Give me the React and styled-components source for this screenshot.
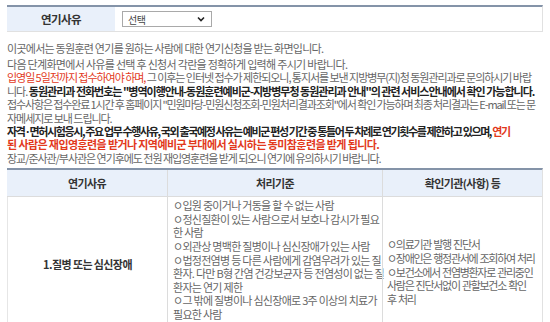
import styled, { createGlobalStyle } from "styled-components";

const GlobalStyle = createGlobalStyle`
  body {
    margin: 0;
    background: #ffffff;
    font-family: "Noto Sans CJK KR", "Noto Sans", sans-serif;
  }
`;

const Page = styled.div`
  width: 536px;
  padding: 5px 7px 0;
  font-size: 11px;
  letter-spacing: -1.05px;
  color: #666666;
`;

const FormTable = styled.div`
  display: grid;
  grid-template-columns: 108px 1fr;
  border-top: 2px solid #8493a8;
  border-bottom: 1px solid #e1e1e1;
  border-right: 1px solid #e1e1e1;
`;

const FormLabel = styled.div`
  background: #e9f0fa;
  color: #333333;
  font-weight: 700;
  font-size: 11.5px;
  letter-spacing: -0.6px;
  display: flex;
  align-items: center;
  justify-content: center;
  height: 24px;
`;

const FormField = styled.div`
  display: flex;
  align-items: center;
  padding-left: 7px;
`;

const SelectBox = styled.div`
  width: 90px;
  height: 16px;
  border: 1px solid #a9a9a9;
  display: flex;
  align-items: center;
  justify-content: space-between;
  padding: 0 6px 0 5px;
  box-sizing: border-box;
  color: #444444;
  font-size: 10px;
  letter-spacing: -0.4px;
`;

const Intro = styled.p`
  margin: 9px 0 3px;
  line-height: 14px;
  white-space: nowrap;
  letter-spacing: -0.74px;
`;

const Notes = styled.div`
  line-height: 13.4px;
`;

const Line = styled.div`
  white-space: nowrap;
  color: ${(p) => (p.$strong ? "#222222" : "#666666")};
  font-weight: ${(p) => (p.$strong ? 700 : 400)};
  letter-spacing: ${(p) => (p.$ls !== undefined ? `${p.$ls}px` : "inherit")};
`;

const Red = styled.span`
  color: #e2391c;
  font-weight: ${(p) => (p.$bold ? 700 : 400)};
`;

const Bold = styled.span`
  color: #222222;
  font-weight: 700;
`;

const Table = styled.div`
  margin-top: 3px;
  display: grid;
  grid-template-columns: 160px 215px 1fr;
  border-top: 2px solid #8493a8;
  border-right: 1px solid #e1e1e1;
`;

const HeadCell = styled.div`
  background: #e9f0fa;
  color: #333333;
  font-weight: 700;
  letter-spacing: -0.6px;
  height: 26px;
  display: flex;
  align-items: center;
  justify-content: center;
  border-left: ${(p) => (p.$first ? "none" : "1px solid #dcdcdc")};
  border-bottom: 1px solid #dcdcdc;
`;

const Cell = styled.div`
  padding: ${(p) => (p.$center ? "0" : p.$middle ? "16px 4px 0" : "2px 2px 10px 5px")};
  display: flex;
  flex-direction: column;
  justify-content: ${(p) => (p.$middle || p.$center ? "center" : "flex-start")};
  align-items: ${(p) => (p.$center ? "center" : "stretch")};
  border-left: ${(p) => (p.$first ? "1px solid #e6e6e6" : "1px solid #dcdcdc")};
  line-height: 13.6px;
  white-space: nowrap;
  color: ${(p) => (p.$center ? "#333333" : "#666666")};
  font-weight: ${(p) => (p.$center ? 700 : 400)};
  letter-spacing: ${(p) => (p.$center ? "-0.6px" : p.$middle ? "-1.3px" : "-0.72px")};
  word-spacing: ${(p) => (p.$middle ? "1px" : "0")};
`;

const Chevron = () => (
  <svg width="8" height="6" viewBox="0 0 8 6">
    <path d="M1 1.5 L4 4.5 L7 1.5" fill="none" stroke="#222" strokeWidth="1.6" />
  </svg>
);

const criteria = [
  "ㅇ입원 중이거나 거동을 할 수 없는 사람",
  "ㅇ정신질환이 있는 사람으로서 보호나 감시가 필요",
  "한 사람",
  "ㅇ외관상 명백한 질병이나 심신장애가 있는 사람",
  "ㅇ법정전염병 등 다른 사람에게 감염우려가 있는 질",
  "환자. 다만 B형 간염 건강보균자 등 전염성이 없는 질",
  "환자는 연기 제한",
  "ㅇ그 밖에 질병이나 심신장애로 3주 이상의 치료가",
  "필요한 사람",
];

const agencies = [
  "ㅇ의료기관 발행 진단서",
  " ㅇ장애인은 행정관서에 조회하여 처리",
  " ㅇ보건소에서 전염병환자로 관리중인",
  "사람은 진단서없이 관할보건소 확인",
  "후 처리",
];

const App = () => {
  return (
    <>
      <GlobalStyle />
      <Page>
        <FormTable>
          <FormLabel>연기사유</FormLabel>
          <FormField>
            <SelectBox>
              <span>선택</span>
              <Chevron />
            </SelectBox>
          </FormField>
        </FormTable>

        <Intro>이곳에서는 동원훈련 연기를 원하는 사람에 대한 연기신청을 받는 화면입니다.</Intro>

        <Notes>
          <Line $ls={-0.7}>다음 단계화면에서 사유를 선택 후 신청서 각란을 정확하게 입력해 주시기 바랍니다.</Line>
          <Line>
            <Red>입영일 5일전까지 접수하여야 하며,</Red> 그 이후는 인터넷 접수가 제한되오니, 통지서를 보낸
            지방병무(지)청 동원관리과로 문의하시기 바랍
          </Line>
          <Line $ls={-1.0}>
            니다.{" "}
            <Bold>
              동원관리과 전화번호는 "병역이행안내-동원훈련예비군-지방병무청 동원관리과 안내"의 관련
              서비스안내에서 확인 가능합니다.
            </Bold>
          </Line>
          <Line $ls={-1.13}>
            접수사항은 접수완료 1시간 후 홈페이지 "민원마당-민원신청조회-민원처리결과조회"에서 확인 가능하며 최종
            처리결과는 E-mail 또는 문
          </Line>
          <Line>자메세지로 보내 드립니다.</Line>
          <Line $strong $ls={-1.38}>
            자격·면허시험응시, 주요 업무 수행사유, 국외 출국예정 사유는 예비군 편성 기간 중 통틀어 두 차례로
            연기횟수를 제한하고 있으며, <Red $bold>연기</Red>
          </Line>
          <Line $strong $ls={-0.6}>
            <Red $bold>된 사람은 재입영훈련을 받거나 지역예비군 부대에서 실시하는 동미참훈련을 받게 됩니다.</Red>
          </Line>
          <Line>장교/준사관/부사관은 연기후에도 전원 재입영훈련을 받게 되오니 연기에 유의하시기 바랍니다.</Line>
        </Notes>

        <Table>
          <HeadCell $first>연기사유</HeadCell>
          <HeadCell>처리기준</HeadCell>
          <HeadCell>확인기관(사항) 등</HeadCell>
          <Cell $first $center>1.질병 또는 심신장애</Cell>
          <Cell>
            {criteria.map((c) => (
              <div key={c}>{c}</div>
            ))}
          </Cell>
          <Cell $middle>
            {agencies.map((a) => (
              <div key={a}>{a}</div>
            ))}
          </Cell>
        </Table>
      </Page>
    </>
  );
};

export default App;
